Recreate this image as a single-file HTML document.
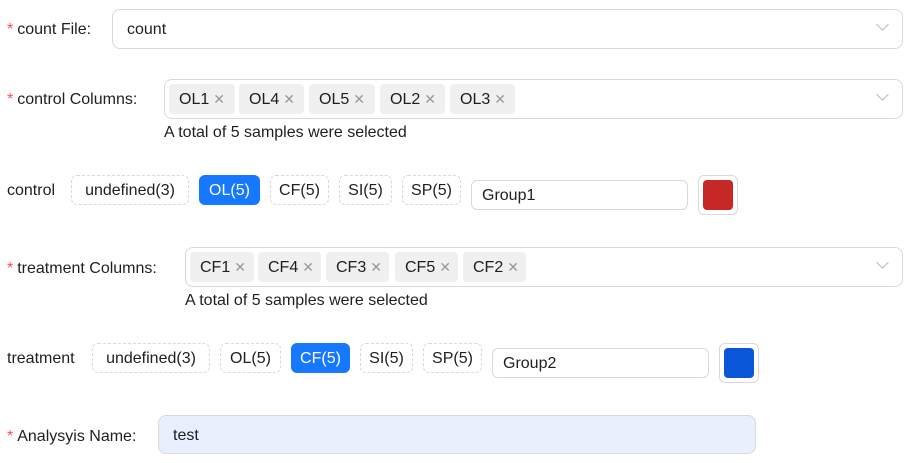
<!DOCTYPE html><html><head><style>
body{margin:0;width:923px;height:463px;background:#fff;font-family:"Liberation Sans",sans-serif;font-size:16px;color:rgba(0,0,0,.88);position:relative;overflow:hidden}
.a{position:absolute;box-sizing:border-box;white-space:nowrap}
.lbl{line-height:20px}
.lbl b{color:#ff4d4f;font-weight:normal;margin-right:4px}
.sel{border:1px solid #d9d9d9;border-radius:8px;height:40px}
.arr{position:absolute;right:15px;top:10px;width:8px;height:8px;border-right:1.2px solid #bbb;border-bottom:1.2px solid #bbb;transform:rotate(45deg)}
.tag{background:#f0f0f0;border-radius:4px;height:30px;line-height:31px;padding-left:10px;top:4px}
.tag i{font-style:normal;color:#999;margin-left:4px;font-size:14px}
.btn{border:1px dashed #d9d9d9;border-radius:6px;height:30px;line-height:30px;text-align:center}
.on{background:#1677ff;color:#fff;border:1px solid #1677ff}
.inp{border:1px solid #d9d9d9;border-radius:6px;height:30px;line-height:30px;padding-left:10px}
.sw{border:1px solid #d9d9d9;border-radius:6px;width:40px;height:40px;padding:4px}
.sw div{width:100%;height:100%;border-radius:4px}
.hint{line-height:20px}
</style></head><body>
<div class="a lbl" style="left:7px;top:20px"><b>*</b>count File:</div>
<div class="a sel" style="left:112px;top:9px;width:791px;padding:9px 14px;line-height:22px">count<span class="arr"></span></div>

<div class="a lbl" style="left:7px;top:90px"><b>*</b>control Columns:</div>
<div class="a sel" style="left:164px;top:79px;width:739px"><span class="arr"></span>
<div class="a tag" style="left:4px;width:66px">OL1<i>✕</i></div>
<div class="a tag" style="left:74px;width:65px">OL4<i>✕</i></div>
<div class="a tag" style="left:144px;width:66px">OL5<i>✕</i></div>
<div class="a tag" style="left:215px;width:65px">OL2<i>✕</i></div>
<div class="a tag" style="left:285px;width:65px">OL3<i>✕</i></div>
</div>
<div class="a hint" style="left:164px;top:123px">A total of 5 samples were selected</div>

<div class="a lbl" style="left:7px;top:181px">control</div>
<div class="a btn" style="left:71px;top:175px;width:118px">undefined(3)</div>
<div class="a btn on" style="left:199px;top:175px;width:61px">OL(5)</div>
<div class="a btn" style="left:270px;top:175px;width:59px">CF(5)</div>
<div class="a btn" style="left:339px;top:175px;width:53px">SI(5)</div>
<div class="a btn" style="left:402px;top:175px;width:59px">SP(5)</div>
<div class="a inp" style="left:471px;top:180px;width:217px">Group1</div>
<div class="a sw" style="left:698px;top:175px"><div style="background:#c62828"></div></div>

<div class="a lbl" style="left:7px;top:259px"><b>*</b>treatment Columns:</div>
<div class="a sel" style="left:185px;top:247px;width:718px"><span class="arr"></span>
<div class="a tag" style="left:4px;width:64px">CF1<i>✕</i></div>
<div class="a tag" style="left:72px;width:63px">CF4<i>✕</i></div>
<div class="a tag" style="left:140px;width:63px">CF3<i>✕</i></div>
<div class="a tag" style="left:209px;width:63px">CF5<i>✕</i></div>
<div class="a tag" style="left:277px;width:63px">CF2<i>✕</i></div>
</div>
<div class="a hint" style="left:185px;top:291px">A total of 5 samples were selected</div>

<div class="a lbl" style="left:7px;top:349px">treatment</div>
<div class="a btn" style="left:92px;top:343px;width:118px">undefined(3)</div>
<div class="a btn" style="left:220px;top:343px;width:61px">OL(5)</div>
<div class="a btn on" style="left:291px;top:343px;width:59px">CF(5)</div>
<div class="a btn" style="left:360px;top:343px;width:53px">SI(5)</div>
<div class="a btn" style="left:423px;top:343px;width:59px">SP(5)</div>
<div class="a inp" style="left:492px;top:348px;width:217px">Group2</div>
<div class="a sw" style="left:719px;top:343px"><div style="background:#0a56d8"></div></div>

<div class="a lbl" style="left:7px;top:427px"><b>*</b>Analysyis Name:</div>
<div class="a" style="left:158px;top:415px;width:598px;height:39px;border:1px solid #d9d9d9;border-radius:8px;background:#e8f0fe;padding-left:14px;line-height:39px">test</div>
</body></html>
